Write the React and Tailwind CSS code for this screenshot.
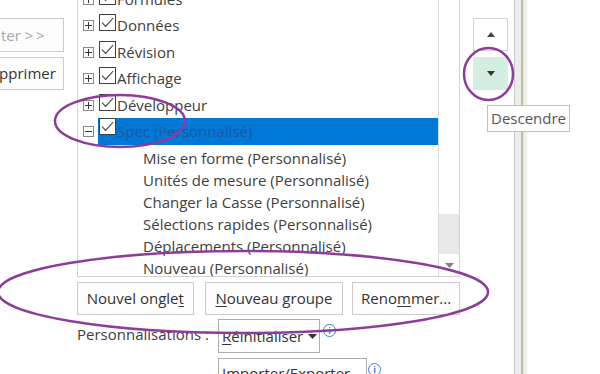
import { Fragment } from "react";

const topTabs = ["Formules", "Données", "Révision", "Affichage", "Développeur"];
const specGroups = [
  "Mise en forme (Personnalisé)",
  "Unités de mesure (Personnalisé)",
  "Changer la Casse (Personnalisé)",
  "Sélections rapides (Personnalisé)",
  "Déplacements (Personnalisé)",
  "Nouveau (Personnalisé)",
];

const Expander = ({ open }) => (
  <span className="flex h-[11px] w-[11px] shrink-0 items-center justify-center border border-[#8a8a8a] bg-white">
    <svg width="7" height="7" viewBox="0 0 7 7">
      <path d="M0 3.5H7" stroke="#333" strokeWidth="1" />
      {!open && <path d="M3.5 0V7" stroke="#333" strokeWidth="1" />}
    </svg>
  </span>
);

const Check = () => (
  <span className="flex h-[17px] w-[17px] shrink-0 items-center justify-center border border-[#3f3f3f] bg-white">
    <svg width="13" height="11" viewBox="0 0 13 11">
      <path d="M1 5.5L4.6 9.4L12.2 1" fill="none" stroke="#3a3a3a" strokeWidth="1.1" />
    </svg>
  </span>
);

const Btn = ({ children, className = "" }) => (
  <div className={"flex h-[33px] items-center justify-center border border-[#cccccc] bg-[#fdfdfd] text-[15px] text-[#333] " + className}>
    {children}
  </div>
);

const Info = () => (
  <span className="flex h-[13px] w-[13px] items-center justify-center rounded-full border border-[#3b82d6] text-[9px] font-bold leading-none text-[#3b82d6]">
    i
  </span>
);

const App = () => {
  return (
    <div className="relative h-[374px] w-[600px] overflow-hidden bg-white text-[#404040]" style={{ fontFamily: '"Open Sans", sans-serif' }}>
      <div className="flex">
        {/* left buttons (cut off) */}
        <div className="w-[77px] shrink-0 pt-[18px]">
          <Btn className="ml-[-50px] w-[114px] !h-[34px] text-[#a8a8a8]">Ajouter &gt;&thinsp;&gt;</Btn>
          <Btn className="ml-[-50px] mt-[5px] w-[114px]">&lt;&thinsp;&lt; Supprimer</Btn>
        </div>

        {/* list + actions */}
        <div className="w-[383px] shrink-0">
          <div className="flex h-[277px] overflow-hidden border-b border-l border-r border-[#d2d2d2] text-[15px]">
            <div className="flex-1 overflow-hidden">
              <div className="mt-[-14.5px]">
                {topTabs.map((t) => (
                  <div key={t} className="flex h-[26.5px] items-start pl-[5px]">
                    <span className="mt-[8px]"><Expander /></span>
                    <span className="ml-[5px] mt-[2px]"><Check /></span>
                    <span className="ml-[1px] whitespace-nowrap leading-[26.5px]">{t}</span>
                  </div>
                ))}
                <div className="flex h-[27px] items-start pl-[5px]">
                  <span className="mt-[8px]"><Expander open /></span>
                  <div className="ml-[4px] flex h-[27px] flex-1 items-start bg-[#0078d7]">
                    <span className="ml-[1px]"><Check /></span>
                    <span className="ml-[1px] whitespace-nowrap leading-[27px] text-[#1a58a3]">Spec (Personnalisé)</span>
                  </div>
                </div>
                <div className="mt-[2px]">
                  {specGroups.map((g) => (
                    <div key={g} className="h-[22px] whitespace-nowrap pl-[65px] leading-[22px]">{g}</div>
                  ))}
                </div>
              </div>
            </div>
            <div className="flex w-[21px] shrink-0 flex-col border-l border-[#dcdcdc]">
              <div className="flex-1 bg-white" />
              <div className="h-[40px] bg-[#e8e8e8]" />
              <div className="flex h-[22px] items-center justify-center bg-white">
                <svg width="9" height="5" viewBox="0 0 9 5"><path d="M0 0H9L4.5 5Z" fill="#808080" /></svg>
              </div>
            </div>
          </div>

          <div className="mt-[5px] flex">
            <Btn className="w-[117px]">Nouvel ongle<span className="underline underline-offset-2">t</span></Btn>
            <Btn className="ml-[11px] w-[139px]"><span className="underline underline-offset-2">N</span>ouveau groupe</Btn>
            <Btn className="ml-[9px] w-[108px] whitespace-nowrap">Reno<span className="underline underline-offset-2">m</span>mer...</Btn>
          </div>

          <div className="mt-[4px] flex items-start">
            <div className="w-[141px] shrink-0 pt-[4px] text-[15px]">Personnalisations :</div>
            <div className="flex h-[34px] w-[102px] items-center border border-[#adadad] pl-[3px] text-[15px] text-[#333]">
              <span><span className="underline underline-offset-2">R</span>éinitialiser</span>
              <svg className="ml-[5px]" width="9" height="5" viewBox="0 0 9 5"><path d="M0 0H9L4.5 5Z" fill="#333" /></svg>
            </div>
            <span className="ml-[3px] mt-[5px]"><Info /></span>
          </div>

          <div className="mt-[5px] flex items-start">
            <div className="ml-[141px] h-[34px] w-[149px] whitespace-nowrap border border-[#adadad] pl-[3px] pt-[3px] text-[15px] leading-[22px] text-[#333]">
              <span className="underline underline-offset-2">I</span>mporter/Exporter
            </div>
            <span className="ml-[1px] mt-[5px]"><Info /></span>
          </div>
        </div>

        {/* move up / down */}
        <div className="w-[54px] shrink-0 pl-[13px] pt-[18px]">
          <div className="flex h-[33px] w-[35px] items-center justify-center border border-[#d0d0d0] bg-white">
            <svg width="8" height="5" viewBox="0 0 8 5"><path d="M0 5H8L4 0Z" fill="#444" /></svg>
          </div>
          <div className="mt-[6px] flex h-[33px] w-[35px] items-center justify-center bg-[#d5eee2]">
            <svg width="8" height="5" viewBox="0 0 8 5"><path d="M0 0H8L4 5Z" fill="#333" /></svg>
          </div>
        </div>

        {/* window edge */}
        <div className="flex h-[374px] shrink-0">
          <div className="w-[7px] border-l border-[#c9c9c9] bg-[#ececec]" />
          <div className="w-[2px] bg-[#b3c59a]" />
          <div className="w-[6px] bg-gradient-to-r from-[#e4e4e4] to-white" />
        </div>
      </div>

      {/* tooltip */}
      <div className="absolute left-[487px] top-[105px] flex h-[27px] items-center border border-[#c2c2c2] bg-white px-[3px] text-[15px] text-[#555]">
        Descendre
      </div>

      {/* annotations */}
      <svg className="pointer-events-none absolute inset-0" width="600" height="374">
        <g fill="none" stroke="#8e3c9c" strokeWidth="2.5">
          <ellipse cx="120" cy="121" rx="65" ry="26" />
          <ellipse cx="488.5" cy="74" rx="24.5" ry="26" />
          <ellipse cx="243" cy="292" rx="245" ry="41" />
        </g>
      </svg>
    </div>
  );
};

export default App;
